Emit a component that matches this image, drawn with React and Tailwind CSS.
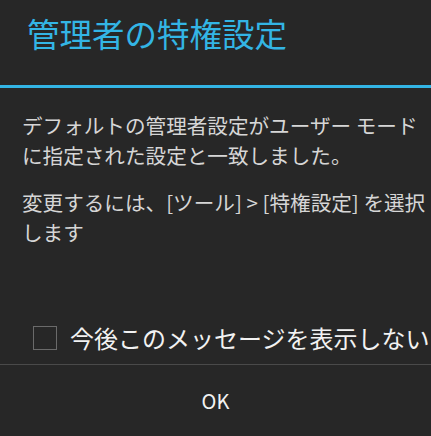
import React, { useState } from "react";

// Privilege settings notice dialog (dark Holo style)
export default function App() {
  const [dontShow, setDontShow] = useState(false);

  return (
    <div
      className="h-[436px] w-full overflow-hidden bg-[#272727] flex flex-col"
      style={{ fontFamily: '"Noto Sans CJK JP", "Noto Sans", sans-serif' }}
    >
      <div className="h-[85px] pl-[27px] pt-[14px]">
        <h1 className="text-[32.5px] leading-[38px] text-[#33b5e5] font-normal whitespace-nowrap">
          管理者の特権設定
        </h1>
      </div>
      <div className="h-[3px] bg-[#33b5e5]" />

      <div className="pl-[22px] pr-2 pt-[22px] text-[20.6px] leading-[30px] text-[#d6d6d6]">
        <p className="whitespace-nowrap">
          デフォルトの管理者設定がユーザー モード
          <br />
          に指定された設定と一致しました。
        </p>
        <p className="mt-[17px] whitespace-nowrap">
          変更するには、[ツール] &gt; [特権設定] を選択
          <br />
          します
        </p>
      </div>

      <div className="flex-1" />

      <button
        onClick={() => setDontShow(!dontShow)}
        className="flex items-center pl-[33px] pb-[10px] text-left"
      >
        <span className="w-6 h-6 shrink-0 border border-[#6a6a6a] flex items-center justify-center text-[#33b5e5] text-sm">
          {dontShow ? "✓" : ""}
        </span>
        <span className="ml-[13px] text-[24px] leading-[32px] text-[#f2f2f2] whitespace-nowrap">
          今後このメッセージを表示しない
        </span>
      </button>

      <div className="h-px bg-[#4a4a4a]" />

      <button className="h-[71px] w-full flex items-center justify-center text-[20px] text-[#f2f2f2]">
        OK
      </button>
    </div>
  );
}
